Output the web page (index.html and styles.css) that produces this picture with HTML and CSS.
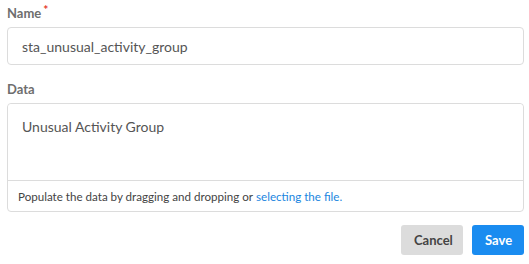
FILE: index.html
```html
<!DOCTYPE html>
<html lang="en">
<head>
  <meta charset="UTF-8">
  <title>Edit group</title>
  <link rel="stylesheet" href="styles.css">
</head>
<body>
  <form class="form">
    <div class="field">
      <label class="label" for="name">Name<span class="req">*</span></label>
      <input class="input" type="text" id="name" value="sta_unusual_activity_group">
    </div>
    <div class="field">
      <label class="label" for="data">Data</label>
      <div class="data-box">
        <textarea class="textarea" id="data">Unusual Activity Group</textarea>
        <div class="drop-hint">Populate the data by dragging and dropping or <a href="#">selecting the file.</a></div>
      </div>
    </div>
    <div class="actions">
      <button type="button" class="btn btn-cancel">Cancel</button>
      <button type="submit" class="btn btn-save">Save</button>
    </div>
  </form>
</body>
</html>
```

FILE: styles.css
```css
* {
  box-sizing: border-box;
  font-family: Lato, 'Open Sans', sans-serif;
}

body {
  margin: 0;
  background: #fff;
}

.form {
  padding: 5px 5px 0 7px;
}

.field {
  margin-bottom: 16px;
}

.label {
  display: block;
  font-size: 13px;
  font-weight: 700;
  color: #6e6e6e;
  line-height: 16px;
  margin-bottom: 6px;
}

.req {
  color: #e5382b;
  font-size: 12px;
  vertical-align: top;
  position: relative;
  top: -3px;
  margin-left: 2px;
}

.input {
  display: block;
  width: 100%;
  height: 38px;
  padding: 0 14px;
  border: 1px solid #dcdcdc;
  border-radius: 4px;
  font-size: 14px;
  color: #555;
  outline: none;
}

.data-box {
  border: 1px solid #dcdcdc;
  border-radius: 4px;
}

.textarea {
  display: block;
  width: 100%;
  height: 77px;
  padding: 14px 14px;
  border: none;
  border-bottom: 1px solid #dcdcdc;
  border-radius: 4px 4px 0 0;
  font-size: 14px;
  color: #555;
  resize: none;
  outline: none;
}

.drop-hint {
  height: 30px;
  padding: 0 10px;
  display: flex;
  align-items: center;
  font-size: 11.6px;
  color: #444;
}

.drop-hint a {
  color: #1a86e0;
  text-decoration: none;
  margin-left: 3px;
}

.actions {
  display: flex;
  justify-content: flex-end;
  gap: 9px;
  margin-top: -3px;
}

.btn {
  height: 30px;
  border: none;
  border-radius: 3px;
  font-size: 13px;
  font-weight: 700;
  padding: 0 13px;
  cursor: pointer;
}

.btn-cancel {
  background: #dcdcdc;
  color: #444;
  width: 62px;
}

.btn-save {
  background: #1a8cf0;
  color: #fff;
  width: 52px;
}
```
